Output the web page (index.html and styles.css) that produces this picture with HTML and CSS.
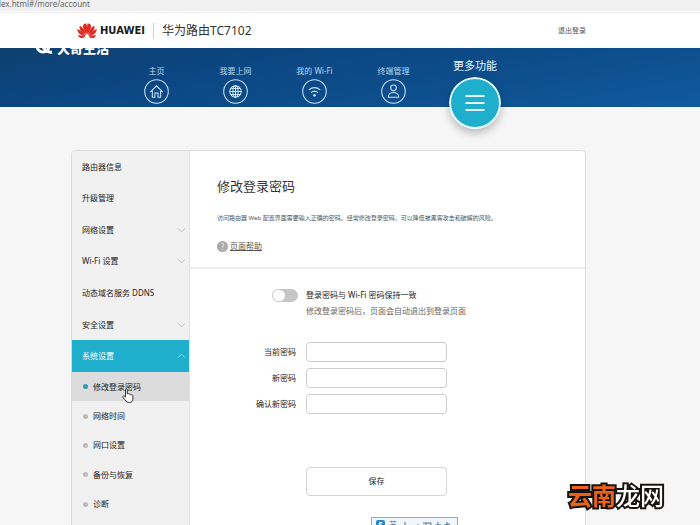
FILE: index.html
```html
<!DOCTYPE html>
<html lang="zh-CN">
<head>
<meta charset="utf-8">
<meta name="viewport" content="width=device-width, initial-scale=1">
<title>修改登录密码</title>
<link rel="stylesheet" href="styles.css">
</head>
<body>
<div class="address">dex.html#/more/account</div>
<header class="header">
  <div class="brand">
    <svg class="logo" viewBox="0 0 40 32" aria-hidden="true">
      <g fill="#e02b22">
        <path d="M19.500 23C13.500 15 9.500 7 13.500 2.500c1.200-1.300 3.900-1.900 5.200-1.700C20.800 8 20.200 17 19.500 23z"/>
        <path d="M18.200 24.500C8.500 19 3.500 12 5.500 5.500c5 1.500 10.700 10 12.700 19z"/>
        <path d="M17.200 26.200C8 25.800.5 20 .5 12c5.500 1.500 12.700 7.500 16.700 14.200z"/>
        <path d="M16.700 27.300C11 32 5 30.500 1.500 24.300c5.200 0 10.700 1 15.200 3z"/>
        <path d="M20.500 23c6-8 10-16 6-20.500-1.200-1.300-3.900-1.900-5.200-1.700C19.200 8 19.800 17 20.500 23z"/>
        <path d="M21.800 24.500c9.700-5.500 14.700-12.500 12.700-19-5 1.500-10.700 10-12.700 19z"/>
        <path d="M22.800 26.200c9.200-.4 16.700-6.200 16.700-14.200-5.500 1.500-12.700 7.500-16.700 14.200z"/>
        <path d="M23.300 27.300c5.700 4.700 11.700 3.200 15.200-3-5.200 0-10.700 1-15.200 3z"/>
      </g>
    </svg>
    <span class="brand-name">HUAWEI</span>
    <span class="model">华为路由TC7102</span>
  </div>
  <a class="logout" href="#">退出登录</a>
</header>
<nav class="nav">
  <div class="stamp">
    <svg viewBox="0 0 20 16" aria-hidden="true"><circle cx="9" cy="7" r="6"/><path d="M9 8q4 6 9 5"/></svg>
    <span>大奇生活</span>
  </div>
  <a class="nav-item" href="#"><span>主页</span>
    <svg viewBox="0 0 24 24"><circle cx="12" cy="12" r="11.300"/><path d="M6 12.500l6-6 6 6M8 11v6.500h2.500v-4h3v4H16V11"/></svg></a>
  <a class="nav-item" href="#"><span>我要上网</span>
    <svg viewBox="0 0 24 24"><circle cx="12" cy="12" r="11.300"/><circle cx="12" cy="12" r="5.500"/><ellipse cx="12" cy="12" rx="2.500" ry="5.500"/><path d="M12 6.500v11M6.500 12h11M7.500 9.200h9M7.500 14.800h9"/></svg></a>
  <a class="nav-item" href="#"><span>我的 Wi-Fi</span>
    <svg viewBox="0 0 24 24"><circle cx="12" cy="12" r="11.300"/><path d="M6.500 10.500q5.500-4.500 11 0M8.700 13q3.300-2.700 6.600 0"/><circle class="dot" cx="12" cy="15.700" r="1.300"/></svg></a>
  <a class="nav-item" href="#"><span>终端管理</span>
    <svg viewBox="0 0 24 24"><circle cx="12" cy="12" r="11.300"/><circle cx="12" cy="8.500" r="2.700"/><path d="M7 17.500c0-6 10-6 10 0z"/></svg></a>
  <a class="nav-item active" href="#"><span>更多功能</span>
    <svg viewBox="0 0 52 52"><circle cx="26" cy="26" r="25"/><path d="M16.500 19h19M16.500 26h19M16.500 33h19"/></svg></a>
</nav>
<div class="card">
  <aside class="sidebar">
    <div class="menu">
      <a href="#">路由器信息</a>
      <a href="#">升级管理</a>
      <a href="#">网络设置<svg viewBox="0 0 10 6"><path d="M1 1l4 4 4-4"/></svg></a>
      <a href="#">Wi-Fi 设置<svg viewBox="0 0 10 6"><path d="M1 1l4 4 4-4"/></svg></a>
      <a href="#">动态域名服务 DDNS</a>
      <a href="#">安全设置<svg viewBox="0 0 10 6"><path d="M1 1l4 4 4-4"/></svg></a>
      <a class="open" href="#">系统设置<svg viewBox="0 0 10 6"><path d="M1 5l4-4 4 4"/></svg></a>
    </div>
    <div class="submenu">
      <a class="current" href="#">修改登录密码
        <svg class="pointer" viewBox="0 0 12 15" aria-hidden="true"><path d="M3.500 9V1.800C3.500.5 5.300.5 5.300 1.800V6c.6-.7 1.700-.5 1.900.4.700-.6 1.600-.3 1.800.5.900-.4 1.900 0 1.900 1V11c0 2-1.200 3.400-3 3.400H6.200C4.500 14.400 3.500 12.500 1 9.300.4 8.300 1.700 7.400 2.500 8.100z"/></svg></a>
      <a href="#">网络时间</a>
      <a href="#">网口设置</a>
      <a href="#">备份与恢复</a>
      <a href="#">诊断</a>
    </div>
  </aside>
  <main class="main">
    <section class="intro">
      <h1>修改登录密码</h1>
      <p>访问路由器 Web 配置界面需要输入正确的密码。经常修改登录密码，可以降低被黑客攻击和破解的风险。</p>
      <a class="help" href="#"><span class="mark">?</span><span class="help-text">页面帮助</span></a>
    </section>
    <form class="form">
      <input class="switch" type="checkbox" id="same">
      <div class="sync">
        <label for="same">登录密码与 Wi-Fi 密码保持一致</label>
        <p>修改登录密码后，页面会自动退出到登录页面</p>
      </div>
      <label for="now">当前密码</label><input class="field" type="password" id="now">
      <label for="new">新密码</label><input class="field" type="password" id="new">
      <label for="again">确认新密码</label><input class="field" type="password" id="again">
      <button class="save" type="button">保存</button>
    </form>
  </main>
</div>
<div class="ime"><b>S</b><span>英</span>
  <svg viewBox="0 0 52 8" aria-hidden="true"><path d="M4 2v6M2 8l4-3M13 5v3M17 4v4M22 3h8v5M25 3v5M22 6h8M37 2v6M34 5h6M46 2v6M43 5l6-1M43 8l3-3 3 3"/></svg></div>
<div class="site-mark"><span>云南</span>龙网</div>
</body>
</html>
```
FILE: styles.css
```css
* { box-sizing: border-box; }
body {
  margin: 0;
  height: 100vh;
  overflow: hidden;
  background: #f6f6f6;
  color: #333;
  font: 8px/12px "Noto Sans", "Noto Sans CJK SC", sans-serif;
}
a { color: inherit; text-decoration: none; }
h1, p { margin: 0; font-weight: 400; }

.address {
  height: 12px;
  line-height: 7px;
  background: #f0f0f0;
  border-bottom: 1px solid #fff;
  color: #666;
  text-indent: -4px;
}
.header {
  display: flex;
  align-items: center;
  justify-content: space-between;
  height: 36px;
  padding: 0 114px 0 77px;
  border-top: 1px solid #eee;
  background: #fff;
}
.brand { display: flex; align-items: center; }
.logo { width: 20px; height: 16px; }
.brand-name {
  margin-left: 3px;
  font: 700 10px/16px "DejaVu Sans", sans-serif;
  color: #1b1b1b;
}
.model {
  margin-left: 8px;
  padding-left: 8px;
  border-left: 1px solid #ccc;
  font-size: 12px;
  line-height: 16px;
}
.logout { font-size: 7px; color: #555; }

.nav {
  position: relative;
  display: grid;
  grid-template-columns: repeat(4, 79px) 84px;
  height: 59px;
  padding-left: 117px;
  background: linear-gradient(170deg, #0e406f 0%, #0b4681 30%, #0d4d8b 60%, #105a9e 100%);
}
.nav-item {
  display: flex;
  flex-direction: column;
  align-items: center;
  padding-top: 17px;
  gap: 2px;
  color: #b8d5ee;
}
.nav-item svg { width: 25px; height: 25px; fill: none; stroke: #c9e6fa; stroke-width: 1; flex: none; }
.nav-item .dot { fill: #c9e6fa; stroke: none; }
.nav-item.active { padding-top: 10px; gap: 3px; color: #e8f5ff; font-size: 11px; line-height: 16px; }
.nav-item.active svg {
  position: relative;
  width: 52px;
  height: 52px;
  fill: #20aecd;
  stroke: #e4fbff;
  stroke-width: 2;
  border-radius: 50%;
  box-shadow: 0 4px 8px rgb(0 0 0 / 25%);
}
.stamp {
  position: absolute;
  left: 34px;
  top: 0;
  display: flex;
  align-items: flex-end;
  gap: 3px;
  height: 7px;
  overflow: hidden;
  color: #fff;
}
.stamp svg { width: 20px; height: 16px; flex: none; fill: none; stroke: #fff; stroke-width: 3; }
.stamp span { font-size: 13px; line-height: 14px; font-weight: 900; }

.card {
  display: grid;
  grid-template-columns: 118px 1fr;
  min-height: 400px;
  margin: 43px 114px 0 71px;
  border: 1px solid #ddd;
  border-radius: 4px 4px 0 0;
  background: #fff;
}
.sidebar { background: #f1f1f1; border-right: 1px solid #e2e2e2; border-radius: 3px 0 0 0; color: #222; }
.menu { display: grid; grid-auto-rows: 1fr; height: 221px; }
.menu a { display: flex; align-items: center; justify-content: space-between; padding: 0 3px 0 10px; }
.menu svg { width: 9px; height: 6px; fill: none; stroke: #bbb; }
.menu .open { background: #20aecd; color: #fff; }
.menu .open svg { stroke: #8fe0f0; }
.submenu { display: grid; grid-auto-rows: 1fr; height: 147px; }
.submenu a { position: relative; display: flex; align-items: center; gap: 5px; padding-left: 11px; }
.submenu a::before { content: ""; width: 5px; height: 5px; border-radius: 50%; background: #bbb; }
.submenu .current { background: #dcdcdc; }
.submenu .current::before { background: #2a9dbd; }
.pointer { position: absolute; left: 50px; top: 16px; width: 12px; height: 15px; fill: #fff; stroke: #333; }

.intro { padding: 25px 27px 14px; border-bottom: 2px solid #eee; }
h1 { font-size: 13px; line-height: 20px; }
.intro p { margin-top: 16px; font-size: 6px; line-height: 12px; color: #555; }
.help { display: inline-flex; align-items: center; gap: 2px; margin-top: 16px; color: #555; }
.mark {
  width: 11px;
  height: 11px;
  border-radius: 50%;
  background: #aaa;
  color: #eee;
  line-height: 11px;
  text-align: center;
}
.help-text { text-decoration: underline; }

.form {
  display: grid;
  grid-template-columns: 106px 141px;
  column-gap: 10px;
  row-gap: 6px;
  align-items: center;
  padding: 20px 0 30px;
}
.form label { text-align: right; color: #222; }
.sync { margin-bottom: 19px; white-space: nowrap; }
.sync p { margin-top: 4px; color: #666; }
.switch {
  appearance: none;
  justify-self: end;
  align-self: start;
  width: 26px;
  height: 13px;
  margin: 0 -2px 0 0;
  padding: 1px;
  border-radius: 7px;
  background: #c6c6c6;
}
.switch::before { content: ""; display: block; width: 12px; height: 11px; border-radius: 6px; background: #fff; }
.field { width: 100%; height: 20px; margin: 0; border: 1px solid #ccc; border-radius: 4px; background: #fff; }
.save {
  grid-column: 2;
  height: 29px;
  margin-top: 47px;
  border: 1px solid #d4d4d4;
  border-radius: 4px;
  background: #fff;
  color: #222;
  font: inherit;
}

.ime {
  position: fixed;
  left: 371px;
  top: 517px;
  display: flex;
  gap: 4px;
  width: 87px;
  height: 16px;
  padding: 2px 4px;
  border: 1px solid #7fb0cf;
  background: #eff7fc;
  color: #3d6f9c;
  line-height: 10px;
}
.ime b { width: 9px; height: 9px; background: #2487d0; color: #fff; text-align: center; line-height: 9px; border-radius: 2px; }
.ime svg { width: 52px; height: 8px; fill: none; stroke: #4a6f94; }
.site-mark {
  position: fixed;
  left: 568px;
  top: 482px;
  font-size: 24px;
  line-height: 28px;
  font-weight: 500;
  color: #fff;
  -webkit-text-stroke: 4px #15120f;
  paint-order: stroke fill;
}
.site-mark span { color: #ec621a; font-weight: 700; }
```
